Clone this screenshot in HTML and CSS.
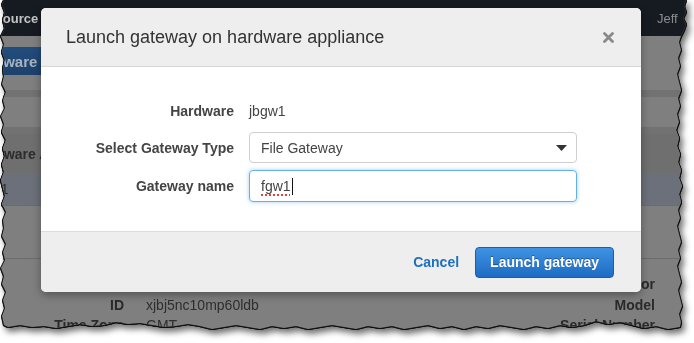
FILE: index.html
```html
<!DOCTYPE html>
<html>
<head>
    <meta charset="UTF-8">
    <title>Launch gateway on hardware appliance</title>
    <link rel="stylesheet" href="styles.css">
</head>
<body>
<div class="shot">
    <div class="paper">
        <div class="topbar">
            <span class="brand">Resource</span>
            <span class="user">Jeff</span>
        </div>
        <div class="gap"></div>
        <div class="tabbar"><span class="tab">Hardware Appliances</span></div>
        <div class="band"></div>
        <div class="stripe"></div>
        <div class="band tall"></div>
        <div class="stripe"></div>
        <div class="thead"><span>Hardware Appliance</span></div>
        <div class="row selected"><span>jbgw1</span></div>
        <div class="row empty"></div>
        <div class="details">
            <dl class="info left">
                <dt>Name</dt><dd>jbgw1</dd>
                <dt>ID</dt><dd>xjbj5nc10mp60ldb</dd>
                <dt>Time Zone</dt><dd>GMT</dd>
            </dl>
            <dl class="info right">
                <dt>Vendor</dt>
                <dt>Model</dt>
                <dt>Serial Number</dt>
            </dl>
        </div>

        <!--弹出层-->
        <div class="modal">
            <div class="modal-head">
                <h3>Launch gateway on hardware appliance</h3>
                <span class="close">
                    <svg width="11" height="11" viewBox="0 0 11 11"><path d="M1.5 1.5 L9.5 9.5 M9.5 1.5 L1.5 9.5" stroke="#8a8a8a" stroke-width="2.8" stroke-linecap="round"/></svg>
                </span>
            </div>
            <div class="modal-body">
                <div class="field">
                    <label>Hardware</label>
                    <span class="value">jbgw1</span>
                </div>
                <div class="field">
                    <label>Select Gateway Type</label>
                    <div class="select">
                        <span>File Gateway</span>
                        <svg width="11" height="6" viewBox="0 0 11 6"><path d="M0 0 H11 L5.5 6 Z" fill="#333"/></svg>
                    </div>
                </div>
                <div class="field">
                    <label>Gateway name</label>
                    <div class="input focus"><span class="typed">fgw1</span><span class="caret"></span></div>
                </div>
            </div>
            <div class="modal-foot">
                <a class="cancel">Cancel</a>
                <button class="btn-primary">Launch gateway</button>
            </div>
        </div>
    </div>
</div>
</body>
</html>
```

FILE: styles.css
```css
* {
    margin: 0;
    padding: 0;
    box-sizing: border-box;
}

body {
    background: #fff;
    font-family: "Liberation Sans", Arial, sans-serif;
    font-size: 14px;
    color: #333;
}

/*截图外框: 撕纸边 + 阴影*/
.shot {
    width: 694px;
    height: 343px;
    filter: drop-shadow(1px 0 0 #111) drop-shadow(-1px 0 0 #111) drop-shadow(0 1px 0 #111) drop-shadow(3px 4px 3px rgba(0, 0, 0, .55));
}

.paper {
    position: relative;
    width: 694px;
    height: 343px;
    background: #7f7f7f;
    overflow: hidden;
    clip-path: polygon(
        4px 0, 686px 0,
        684px 6px, 686px 12px, 683px 18px, 686px 24px, 684px 30px, 681px 36px, 679px 42px, 681px 50px, 678px 58px,
        680px 66px, 677px 74px, 679px 82px, 681px 90px, 678px 98px, 680px 106px, 677px 114px, 679px 122px, 676px 130px,
        679px 138px, 677px 146px, 680px 154px, 678px 162px, 681px 170px, 679px 178px, 682px 186px, 679px 194px, 681px 202px,
        678px 210px, 680px 218px, 677px 226px, 679px 234px, 681px 242px, 678px 250px, 680px 258px, 677px 266px, 679px 274px,
        681px 282px, 678px 290px, 680px 298px, 682px 306px, 679px 314px, 681px 322px, 680px 327px,
        668px 329px, 656px 326px, 644px 328px, 632px 325px, 620px 322px, 608px 324px, 596px 321px, 584px 325px, 572px 327px,
        560px 325px, 548px 328px, 536px 326px, 524px 329px, 512px 327px, 500px 325px, 488px 328px, 476px 326px, 464px 329px,
        452px 326px, 440px 328px, 428px 325px, 416px 327px, 404px 329px, 392px 326px, 380px 328px, 368px 326px, 356px 329px,
        344px 327px, 332px 325px, 320px 327px, 308px 329px, 296px 326px, 284px 328px, 272px 326px, 260px 329px, 248px 327px,
        236px 325px, 224px 327px, 212px 329px, 200px 326px, 188px 324px, 176px 326px, 164px 327px, 152px 325px, 140px 323px,
        128px 324px, 116px 322px, 104px 325px, 92px 326px, 80px 324px, 68px 326px, 56px 328px, 44px 326px, 32px 327px,
        20px 325px, 8px 327px, 4px 325px,
        2px 316px, 5px 308px, 3px 300px, 6px 292px, 2px 284px, 4px 276px, 1px 268px, 5px 260px, 3px 252px, 6px 244px,
        2px 236px, 4px 228px, 3px 220px, 6px 212px, 2px 204px, 5px 196px, 3px 188px, 1px 180px, 4px 172px, 2px 164px,
        5px 156px, 3px 148px, 6px 140px, 2px 132px, 4px 124px, 1px 116px, 5px 108px, 3px 100px, 6px 92px, 2px 84px,
        4px 76px, 3px 68px, 5px 60px, 2px 52px, 4px 44px, 1px 36px, 5px 28px, 3px 20px, 5px 12px, 2px 4px
    );
}

/*背景页面(被遮罩压暗)*/
.topbar {
    height: 36px;
    background: #161b22;
    display: flex;
    align-items: center;
    justify-content: space-between;
    overflow: hidden;
}

.topbar .brand {
    margin-left: -21px;
    font-size: 13px;
    font-weight: bold;
    color: #c4c4c4;
}

.topbar .user {
    margin-right: 11px;
    font-size: 13px;
    color: #8c8c8c;
    width: 26px;
    overflow: hidden;
}

.gap {
    height: 11px;
}

.tabbar {
    height: 28px;
    display: flex;
    white-space: nowrap;
}

.tabbar .tab {
    width: 190px;
    margin-left: -31px;
    padding-left: 31px;
    background: linear-gradient(#234d7d, #1c416b);
    display: flex;
    align-items: center;
    font-size: 15px;
    font-weight: bold;
    color: #a9b3c0;
    text-indent: -31px;
}

.band {
    height: 15px;
}

.band.tall {
    height: 30px;
}

.stripe {
    height: 7px;
    background: #727272;
}

.thead {
    height: 39px;
    background: #6f6f6f;
    display: flex;
    align-items: center;
    white-space: nowrap;
}

.thead span {
    margin-left: -28px;
    font-weight: bold;
    color: #2c2c2c;
}

.row {
    border-bottom: 1px solid #6c6c6c;
    display: flex;
    align-items: center;
}

.row.selected {
    height: 33px;
    background: #6b707a;
}

.row.selected span {
    margin-left: -28px;
    color: #2c2c2c;
}

.row.empty {
    height: 53px;
}

.details {
    padding-top: 15px;
    display: flex;
    justify-content: space-between;
}

.info {
    display: grid;
    line-height: 20.5px;
    white-space: nowrap;
}

.info dt {
    font-weight: bold;
    color: #2a2a2a;
    text-align: right;
}

.info dd {
    color: #2e2e2e;
}

.info.left {
    grid-template-columns: 124px auto;
    column-gap: 22px;
}

.info.right {
    margin-right: 39px;
}

/*弹出层*/
.modal {
    position: absolute;
    left: 41px;
    top: 8px;
    width: 600px;
    background: #fff;
    border-radius: 5px;
    overflow: hidden;
    box-shadow: 0 3px 9px rgba(0, 0, 0, .35);
}

.modal-head {
    height: 59px;
    padding: 0 27px 0 25px;
    background: #eeeeee;
    border-bottom: 1px solid #d6d6d6;
    display: flex;
    align-items: center;
    justify-content: space-between;
}

.modal-head h3 {
    font-size: 18px;
    font-weight: normal;
    color: #333;
}

.modal-head .close {
    display: flex;
    margin-top: 1px;
}

.modal-body {
    height: 164px;
    padding-top: 28px;
    display: flex;
    flex-direction: column;
    gap: 6px;
}

.field {
    display: grid;
    grid-template-columns: 193px 328px;
    column-gap: 15px;
    align-items: center;
    height: 31px;
}

.field label {
    font-weight: bold;
    color: #444;
    text-align: right;
}

.field .value {
    color: #444;
}

.select, .input {
    height: 31px;
    border: 1px solid #cfcfcf;
    border-radius: 4px;
    padding: 0 9px 0 11px;
    display: flex;
    align-items: center;
    color: #444;
}

.select {
    justify-content: space-between;
}

.input.focus {
    height: 32px;
    margin-top: 1px;
    border-color: #66afe9;
    box-shadow: 0 0 4px rgba(102, 175, 233, .6);
}

.input .typed {
    text-decoration: underline dotted #e0443e;
    text-decoration-thickness: 2px;
    text-underline-offset: 3px;
}

.input .caret {
    margin-left: 1px;
    width: 1px;
    height: 17px;
    background: #111;
}

.modal-foot {
    height: 61px;
    padding-right: 27px;
    background: #eeeeee;
    border-top: 1px solid #dcdcdc;
    display: flex;
    align-items: center;
    justify-content: flex-end;
    gap: 16px;
}

.cancel {
    font-weight: bold;
    color: #1f6fbf;
    cursor: pointer;
}

.btn-primary {
    height: 31px;
    padding: 0 14px;
    font-family: "Liberation Sans", Arial, sans-serif;
    font-size: 14px;
    font-weight: bold;
    color: #fff;
    text-shadow: 0 -1px 0 rgba(0, 0, 0, .35);
    background: linear-gradient(#3e93e4, #1e6bc3);
    border: 1px solid #1b5ea7;
    border-radius: 4px;
    cursor: pointer;
}
```
